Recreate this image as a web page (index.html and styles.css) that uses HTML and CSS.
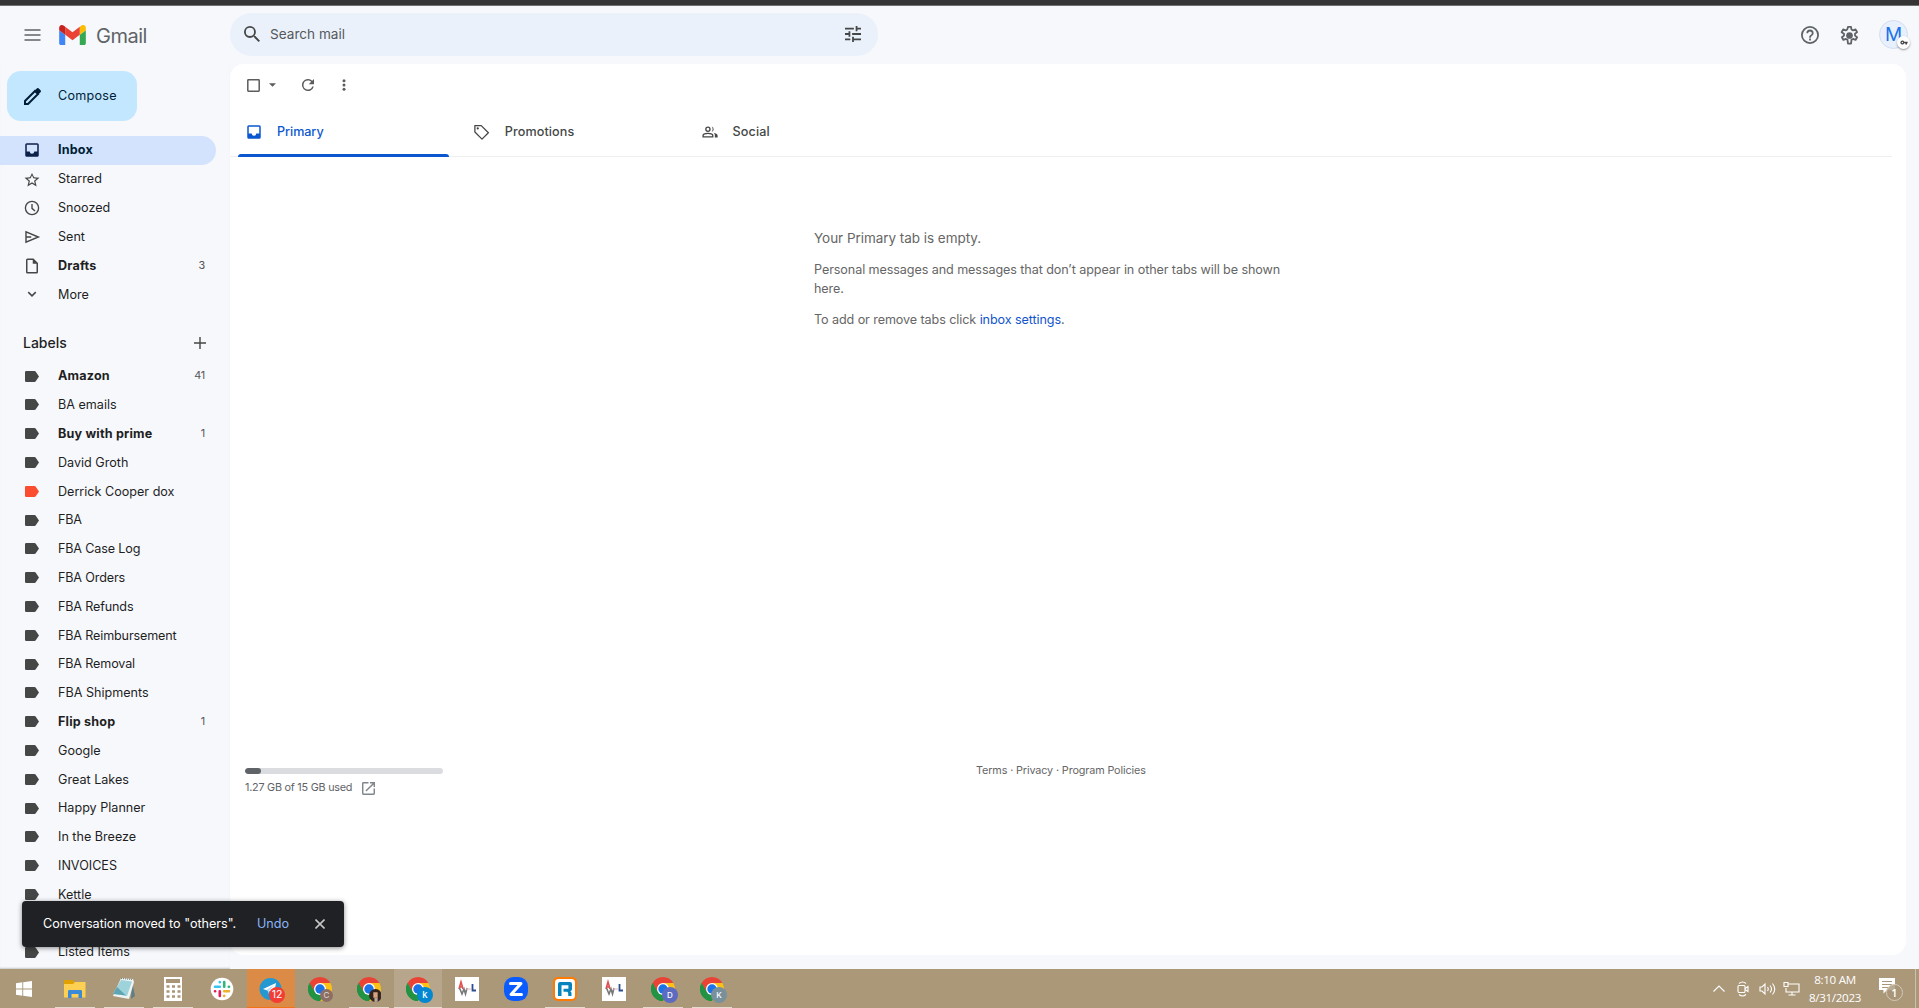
FILE: index.html
```html
<!DOCTYPE html>
<html lang="en">
<head>
<meta charset="utf-8">
<title>Gmail</title>
<link rel="stylesheet" href="styles.css">
</head>
<body>
<svg class="sprite" aria-hidden="true">
  <symbol id="label" viewBox="0 0 14 11"><path d="M1.300 0h8.200c.5 0 .8.2 1.100.5L14 5.500l-3.400 5c-.3.3-.6.5-1.100.5H1.300A1.300 1.300 0 0 1 0 9.700V1.300A1.300 1.300 0 0 1 1.300 0z"/></symbol>
  <symbol id="inbox" viewBox="0 0 24 24"><path fill-rule="evenodd" d="M5 3h14a2 2 0 0 1 2 2v14a2 2 0 0 1-2 2H5a2 2 0 0 1-2-2V5a2 2 0 0 1 2-2zm0 2v9h4a3 3 0 0 0 6 0h4V5z"/></symbol>
  <symbol id="chrome" viewBox="0 0 24 24">
    <path fill="#ea4335" d="M12 12 1.610 6A12 12 0 0 1 22.390 6z"/>
    <path fill="#fbc116" d="M12 12V6h10.390A12 12 0 0 1 12 24l5.200-9z"/>
    <path fill="#229342" d="M12 12l5.200 3L12 24A12 12 0 0 1 1.610 6l5.200 9z"/>
    <path fill="#ea4335" d="M1.610 6 6.800 15 12 6z"/>
    <path fill="#229342" d="M1.610 6 6.800 15l5.200 3 2.600-.5L12 24A12 12 0 0 1 1.610 6z"/>
    <circle cx="12" cy="12" r="6" fill="#fff"/><circle cx="12" cy="12" r="4.700" fill="#1a73e8"/>
  </symbol>
  <symbol id="awl" viewBox="0 0 24 24">
    <path fill="#fff" d="M0 0h24v24H0z"/>
    <path d="M4 12 6 5l2 7M5 10h3" fill="none" stroke="#e05050" stroke-width="1.600"/>
    <path d="M4.500 11 7 17l2-5 1.500 5L12 11" fill="none" stroke="#777" stroke-width="1.600"/>
    <path d="M11 12h5" stroke="#e7b6b6"/><path d="M17.500 7v6.500H21" fill="none" stroke="#2c4d91" stroke-width="1.800"/>
  </symbol>
</svg>
<div class="strip"></div>

<header class="top">
  <div class="brand">
    <svg class="burger" viewBox="0 0 16 12"><path d="M0 1h16M0 6h16M0 11h16" stroke="#5f6368" stroke-width="1.700"/></svg>
    <svg class="logo" viewBox="52 42 88 66"><path fill="#4285f4" d="M58 108h14V74L52 59v43c0 3.320 2.690 6 6 6"/><path fill="#34a853" d="M120 108h14c3.320 0 6-2.690 6-6V59l-20 15"/><path fill="#fbbc04" d="M120 48v26l20-15v-8c0-7.420-8.470-11.650-14.400-7.200"/><path fill="#ea4335" d="M72 74V48l24 18 24-18v26L96 92"/><path fill="#c5221f" d="M52 51v8l20 15V48l-5.600-4.200c-5.940-4.450-14.400-.22-14.400 7.200"/></svg>
    <span class="wordmark">Gmail</span>
  </div>
  <div class="search">
    <svg class="i-search" viewBox="3 3 17.500 17.500"><path d="M15.500 14h-.79l-.28-.27A6.470 6.470 0 0 0 16 9.500 6.500 6.500 0 1 0 9.500 16c1.610 0 3.090-.59 4.230-1.570l.27.28v.79l5 4.990L20.490 19zm-6 0a4.500 4.500 0 1 1 0-9 4.500 4.500 0 0 1 0 9z"/></svg>
    <span>Search mail</span>
    <svg class="i-tune" viewBox="3 3 18 18"><path d="M3 17v2h6v-2zM3 5v2h10V5zm10 16v-2h8v-2h-8v-2h-2v6zM7 9v2H3v2h4v2h2V9zm14 4v-2H11v2zm-6-4h2V7h4V5h-4V3h-2z"/></svg>
  </div>
  <div class="tools">
    <svg class="i20" viewBox="2 2 20 20"><path d="M11 18h2v-2h-2zm1-16a10 10 0 1 0 0 20 10 10 0 0 0 0-20zm0 18a8 8 0 1 1 0-16 8 8 0 0 1 0 16zm0-14a4 4 0 0 0-4 4h2c0-1.100.9-2 2-2s2 .9 2 2c0 2-3 1.750-3 5h2c0-2.250 3-2.500 3-5a4 4 0 0 0-4-4z"/></svg>
    <svg class="i20 gear" viewBox="1.500 1.500 21 21"><path fill="none" stroke="#5f6368" stroke-width="2" stroke-linejoin="round" d="M10.300 2.500h3.400l.5 2.900 1.700 1 2.800-1.100 1.700 3-2.300 1.800v2l2.300 1.800-1.700 3-2.800-1.100-1.700 1-.5 4.100h-3.400l-.5-4.100-1.700-1-2.800 1.100-1.700-3 2.300-1.800v-2L3.300 8.300l1.700-3 2.800 1.100 1.700-1z"/><circle cx="12" cy="12" r="3.700"/></svg>
    <div class="avatar">M<span class="key"><svg viewBox="0 0 24 14"><path fill-rule="evenodd" d="M7 1a6 6 0 1 0 5.700 8H16v4h5V9h2V5H12.700A6 6 0 0 0 7 1zm0 4a2 2 0 1 1 0 4 2 2 0 0 1 0-4z"/></svg></span></div>
  </div>
</header>

<div class="body">
  <nav class="side">
    <div class="compose"><svg viewBox="0 0 17 17"><path fill="none" stroke="#001d35" stroke-width="2" d="M1 16v-3L11 3l3 3L4 16z"/><path d="M10.500 2.800 12.800.5a1.400 1.400 0 0 1 2 0l1.700 1.700a1.400 1.400 0 0 1 0 2l-2.300 2.300z"/></svg><span>Compose</span></div>
    <div class="row active bold"><svg class="i18"><use href="#inbox"/></svg><span>Inbox</span></div>
    <div class="row"><svg class="i18" viewBox="0 0 24 24"><path d="m22 10.240-7.190-.62L12 4 9.190 9.630 2 10.240l5.460 4.730L5.820 22 12 18.270 18.180 22l-1.630-7.030zM12 16.400l-3.760 2.270 1-4.280-3.320-2.880 4.380-.38L12 7.100l1.710 4.040 4.380.38-3.320 2.880 1 4.280z"/></svg><span>Starred</span></div>
    <div class="row"><svg class="i18" viewBox="0 0 24 24"><circle cx="12" cy="12" r="8.800" fill="none" stroke="#444746" stroke-width="1.800"/><path d="M12 6.500v6l4 3.500" fill="none" stroke="#444746" stroke-width="1.800"/></svg><span>Snoozed</span></div>
    <div class="row"><svg class="i18" viewBox="0 0 24 24"><path fill="none" stroke="#444746" stroke-width="1.900" d="M4 5v14l16.500-7zM4 12h7"/></svg><span>Sent</span></div>
    <div class="row bold"><svg class="i18" viewBox="0 0 24 24"><path fill-rule="evenodd" d="M14 2H6a2 2 0 0 0-2 2v16a2 2 0 0 0 2 2h12a2 2 0 0 0 2-2V8zM6 20V4h7v5h5v11z"/></svg><span>Drafts</span><em>3</em></div>
    <div class="row"><svg class="i18" viewBox="0 0 24 24"><path fill="none" stroke="#444746" stroke-width="2" d="m7 9.500 5 5 5-5"/></svg><span>More</span></div>
    <div class="heading"><span>Labels</span><svg viewBox="0 0 12 12"><path d="M6 0v12M0 6h12" stroke="#444746" stroke-width="1.400"/></svg></div>
    <div class="row bold"><svg class="tag"><use href="#label"/></svg><span>Amazon</span><em>41</em></div>
    <div class="row"><svg class="tag"><use href="#label"/></svg><span>BA emails</span></div>
    <div class="row bold"><svg class="tag"><use href="#label"/></svg><span>Buy with prime</span><em>1</em></div>
    <div class="row"><svg class="tag"><use href="#label"/></svg><span>David Groth</span></div>
    <div class="row"><svg class="tag red"><use href="#label"/></svg><span>Derrick Cooper dox</span></div>
    <div class="row fba"><svg class="tag"><use href="#label"/></svg><span>FBA</span></div>
    <div class="row fba"><svg class="tag"><use href="#label"/></svg><span>FBA Case Log</span></div>
    <div class="row fba"><svg class="tag"><use href="#label"/></svg><span>FBA Orders</span></div>
    <div class="row fba"><svg class="tag"><use href="#label"/></svg><span>FBA Refunds</span></div>
    <div class="row fba"><svg class="tag"><use href="#label"/></svg><span>FBA Reimbursement</span></div>
    <div class="row fba"><svg class="tag"><use href="#label"/></svg><span>FBA Removal</span></div>
    <div class="row"><svg class="tag"><use href="#label"/></svg><span>FBA Shipments</span></div>
    <div class="row bold"><svg class="tag"><use href="#label"/></svg><span>Flip shop</span><em>1</em></div>
    <div class="row"><svg class="tag"><use href="#label"/></svg><span>Google</span></div>
    <div class="row"><svg class="tag"><use href="#label"/></svg><span>Great Lakes</span></div>
    <div class="row"><svg class="tag"><use href="#label"/></svg><span>Happy Planner</span></div>
    <div class="row"><svg class="tag"><use href="#label"/></svg><span>In the Breeze</span></div>
    <div class="row"><svg class="tag"><use href="#label"/></svg><span>INVOICES</span></div>
    <div class="row"><svg class="tag"><use href="#label"/></svg><span>Kettle</span></div>
    <div class="row"></div>
    <div class="row"><svg class="tag"><use href="#label"/></svg><span>Listed Items</span></div>
  </nav>

  <main class="panel">
    <div class="toolbar">
      <svg class="check" viewBox="0 0 13 13"><rect x=".8" y=".8" width="11.400" height="11.400" rx=".6" fill="none" stroke="#5a5d5c" stroke-width="1.500"/></svg>
      <svg class="drop" viewBox="0 0 8 4"><path d="M0 0h8L4 4z"/></svg>
      <svg class="refresh" viewBox="4 4 16 16"><path d="M17.650 6.350A8 8 0 1 0 19.730 14h-2.080A6 6 0 1 1 12 6c1.660 0 3.140.69 4.220 1.780L13 11h7V4z"/></svg>
      <svg class="more" viewBox="0 0 4 12"><circle cx="2" cy="1.700" r="1.500"/><circle cx="2" cy="6" r="1.500"/><circle cx="2" cy="10.300" r="1.500"/></svg>
    </div>
    <div class="tabs">
      <div class="tab on"><svg class="i18"><use href="#inbox"/></svg><span>Primary</span></div>
      <div class="tab"><svg class="i18" viewBox="0 0 24 24"><path fill="none" stroke="#444746" stroke-width="1.700" stroke-linejoin="round" d="M2.500 3.500H11L20.500 13 12 21.500 2.500 12z"/><circle cx="6.300" cy="7.300" r="1.500"/></svg><span>Promotions</span></div>
      <div class="tab"><svg class="i18" viewBox="-1 -1 26 26"><path fill="none" stroke="#444746" stroke-width="1.900" d="M2 19v-1.800c0-2 3.500-3.200 7-3.200s7 1.200 7 3.200V19z"/><circle cx="9" cy="8" r="3" fill="none" stroke="#444746" stroke-width="1.900"/><path d="M14.500 4.200a4 4 0 0 1 0 7.600c1.800-2.300 1.800-5.300 0-7.600zM17 13.200c3 .6 6 1.800 6 4V20h-4v-3c0-1.600-.7-2.800-2-3.800z"/></svg><span>Social</span></div>
    </div>
    <section class="empty">
      <p class="lead">Your Primary tab is empty.</p>
      <p>Personal messages and messages that don’t appear in other tabs will be shown<br>here.</p>
      <p class="hint">To add or remove tabs click <a>inbox settings</a>.</p>
    </section>
    <footer class="foot">
      <div class="storage">
        <div class="meter"><i></i></div>
        <div class="used"><span>1.27 GB of 15 GB used</span><svg viewBox="3 3 18 18"><path d="M19 19H5V5h7V3H5a2 2 0 0 0-2 2v14a2 2 0 0 0 2 2h14c1.100 0 2-.9 2-2v-7h-2zM14 3v2h3.590l-9.830 9.830 1.410 1.410L19 6.410V10h2V3z"/></svg></div>
      </div>
      <div class="legal">Terms · Privacy · Program Policies</div>
    </footer>
  </main>
</div>

<div class="toast"><span class="msg">Conversation moved to "others".</span><span class="undo">Undo</span><svg viewBox="0 0 10 10"><path d="m.5.5 9 9m0-9-9 9" stroke="#c4c7c5" stroke-width="1.600"/></svg></div>

<div class="taskbar">
  <div class="task start"><svg viewBox="0 0 16 16"><path fill="#fff" d="M0 2.200 6.300 1.300v6.200H0zM7.200 1.200 16 0v7.500H7.200zM0 8.500h6.300v6.200L0 13.800zM7.200 8.500H16V16l-8.800-1.200z"/></svg></div>
  <div class="task run"><svg class="a24" viewBox="0 0 24 24"><path fill="#e0a100" d="M1 3h9l1.500 2H22v4H1z"/><path fill="#fdcf53" d="M1 7h9l2-2h10.500v15.500H1z"/><path fill="#3a8ad8" d="M5 21v-6.500c0-1 .5-1.500 1.500-1.500h11c1 0 1.500.5 1.500 1.500V21h-3.500v-4h-7v4z"/></svg></div>
  <div class="task run"><svg class="a24" viewBox="0 0 24 24"><path fill="#5f7f86" d="M20 4l3 15-4 3z"/><path fill="#eef4f4" d="m9 1 12 1 1 3-5 17L1 19z"/><path fill="#9fd3dc" d="m9 3 11 1.500L15 19 1 16.500z"/><path fill="#5fa5b4" d="m5 10 9 8.500L1 17z"/><path stroke="#68767a" stroke-dasharray="1 1" d="m9 1.500 12 1"/></svg></div>
  <div class="task run"><svg class="a24" viewBox="0 0 24 24"><path fill="#fff" d="M3 0h18v24H3z"/><path fill="#a99577" d="M5 2h14v4H5z"/><path stroke="#a99577" stroke-width="2.500" stroke-dasharray="3 2.500" d="M5.500 9.500h14M5.500 14.500h14M5.500 19.500h14"/></svg></div>
  <div class="task"><svg class="a24" viewBox="0 0 24 24"><circle cx="12" cy="12" r="11.300" fill="#fff"/><g fill="none" stroke-width="2.600" stroke-linecap="round"><path stroke="#36c5f0" d="M5 9.800h4.800M9.800 5v.2"/><path stroke="#2eb67d" d="M14.200 5v4.800M19 9.800h-.2"/><path stroke="#ecb22e" d="M19 14.200h-4.800M14.200 19v-.2"/><path stroke="#e01e5a" d="M9.800 19v-4.800M5 14.200h.2"/></g></svg></div>
  <div class="task alert"><svg class="a24" viewBox="0 0 24 24"><circle cx="11.500" cy="12" r="11" fill="#2498d0"/><path fill="#fff" d="m4 12 13-6-2 11-5-3z"/><path fill="#b9dcee" d="m8 12.500 7-4.500-5 6v3z"/></svg><b class="badge count">12</b></div>
  <div class="task"><svg class="a24"><use href="#chrome"/></svg><b class="badge brown">C</b></div>
  <div class="task run"><svg class="a24"><use href="#chrome"/></svg><b class="badge photo"><svg viewBox="0 0 12 12"><path fill="#33231d" d="M0 12V4a5 4 0 0 1 11-1v9z"/><path fill="#d6a483" d="M4 3h4v5H4z"/><path fill="#b9a89a" d="M5 8h3v4H5z"/></svg></b></div>
  <div class="task current"><svg class="a24"><use href="#chrome"/></svg><b class="badge blue">k</b></div>
  <div class="task"><svg class="a24"><use href="#awl"/></svg></div>
  <div class="task"><svg class="a24" viewBox="0 0 24 24"><rect width="24" height="24" rx="9.500" fill="#0b5cff"/><path fill="none" stroke="#fff" stroke-width="3" stroke-linejoin="round" stroke-linecap="round" d="M6.500 6.500H17L7 17.500h10.500"/></svg></div>
  <div class="task run"><svg class="a24" viewBox="0 0 24 24"><rect width="24" height="24" rx="5" fill="#ff7a00"/><rect x="2" y="2" width="20" height="20" rx="3.500" fill="#fff"/><path fill="#0684bd" fill-rule="evenodd" d="M5 7a2 2 0 0 1 2-2h10a2 2 0 0 1 2 2v5c0 1.300-.7 2-2 2.200 1 .4 1.500 1 1.500 2V19h-3.300v-2.500c0-1.200-.6-1.800-1.800-1.800H10.500v-2.900h4.900V8.200H8.500V19H5z"/></svg></div>
  <div class="task"><svg class="a24"><use href="#awl"/></svg></div>
  <div class="task run"><svg class="a24"><use href="#chrome"/></svg><b class="badge indigo">D</b></div>
  <div class="task run"><svg class="a24"><use href="#chrome"/></svg><b class="badge slate">K</b></div>
  <div class="tray">
    <svg class="up" viewBox="0 0 12 7"><path d="m.5 6.500 5.500-5.500 5.500 5.500"/></svg>
    <svg class="cam" viewBox="0 0 12 16"><rect x="1" y="4.500" width="7" height="7" rx="1"/><path d="m8 7.500 3-2v5l-3-2M2 2.500q3.500-3 7 0M2 13.500q3.500 3 7 0"/></svg>
    <svg class="vol" viewBox="0 0 17 14"><path d="M1 5v4h2l3 3V2L3 5zM8.500 5q1.500 2 0 4M11 3.500q3 3.500 0 7M13.500 1.500q4.500 5.500 0 11"/></svg>
    <svg class="net" viewBox="0 0 17 14"><path d="M5 2h11v8H3V6M9 10v3M5.500 13h7M1 .5h4v4H1z"/></svg>
    <div class="clock"><span>8:10 AM</span><span>8/31/2023</span></div>
    <div class="note"><svg viewBox="0 0 16 16"><path fill="#fff" stroke="none" d="M0 0h16v12H8l-3.500 3.500V12H0z"/><path stroke="#a99577" d="M3 3.500h10M3 6.500h10M3 9.500h6"/></svg><b>1</b></div>
    <i class="peek"></i>
  </div>
</div>
</body>
</html>
```
FILE: styles.css
```css
* { box-sizing: border-box; }
body {
  margin: 0;
  width: 1919px;
  height: 1008px;
  overflow: hidden;
  position: relative;
  display: flex;
  flex-direction: column;
  background: #f6f8fc;
  color: #1f1f1f;
  font: 12.6px/18px Inter, "Liberation Sans", sans-serif;
}
svg { display: block; flex: none; fill: #444746; }
.sprite { position: absolute; width: 0; height: 0; }
.strip { flex: none; height: 6px; background: #353535; border-bottom: 1px solid #706f72; }

/* Header */
.top { flex: none; height: 58px; display: flex; align-items: flex-start; padding-top: 7px; }
.brand { width: 230px; height: 43px; display: flex; align-items: center; padding: 1px 0 0 24px; }
.burger { width: 17px; height: 12px; margin-right: 18px; }
.logo { width: 27px; height: 20px; margin-right: 10px; }
.wordmark { font: 20px/24px Inter, sans-serif; color: #5f6368; letter-spacing: -.5px; padding-top: 1px; }
.search { width: 648px; height: 43px; border-radius: 22px; background: #eaf1fb; display: flex; align-items: center; padding: 0 17px 1px 14px; }
.search span { flex: 1; color: #55585a; font-size: 13.6px; }
.i-search { width: 16px; height: 16px; margin-right: 10px; }
.i-tune { width: 16px; height: 16px; }
.tools { margin-left: auto; display: flex; align-items: center; height: 43px; padding-right: 11px; }
.i20 { width: 18px; height: 18px; margin-right: 21.5px; fill: #5f6368; position: relative; top: .5px; }
.i20.gear { width: 19px; height: 19px; margin-right: 20px; }
.avatar { width: 29px; height: 29px; border: 1px solid #d3def0; border-radius: 50%; background: #e8f0fe; color: #1a73e8; font-size: 19px; line-height: 27px; text-align: center; position: relative; }
.key { position: absolute; left: 17px; top: 15px; width: 13px; height: 13px; border-radius: 50%; background: #fff; box-shadow: 0 1px 2px #0006; display: grid; place-items: center; }
.key svg { width: 8px; height: 5px; }

/* Sidebar */
.body { flex: none; height: 905px; display: flex; overflow: hidden; }
.side { width: 230px; padding-top: 7px; box-shadow: inset 0 -2px 2px -1px #0003; }
.compose { width: 130px; height: 50px; margin: 0 0 15px 7px; border-radius: 14px; background: #c2e7ff; display: flex; align-items: center; gap: 17px; padding-left: 17px; color: #001d35; letter-spacing: .25px; }
.compose svg { width: 17px; height: 17px; fill: #001d35; }
.row { width: 216px; height: 28.8px; padding: 0 11px 0 23px; display: flex; align-items: center; }
.row span { flex: 1; white-space: nowrap; padding-top: .6px; }
.row em { font-style: normal; font-size: 10.8px; color: #555; padding-top: .6px; letter-spacing: -.2px; }
.bold span { font-weight: 700; letter-spacing: .18px; }
.fba span { letter-spacing: -.15px; }
.i18 { width: 18px; height: 18px; margin-right: 17px; }
.active { background: #d3e3fd; border-radius: 0 15px 15px 0; color: #001d35; }
.active span { padding-top: 0; }
.active svg { fill: #0b2149; }
.tag { width: 14px; height: 11px; margin: 0 19px 0 2px; }
.red { fill: #fb4c2f; }
.heading { width: 216px; height: 53px; padding: 25.5px 10px 0 23px; display: flex; align-items: flex-start; justify-content: space-between; font-size: 14px; font-weight: 500; }
.heading svg { width: 12px; height: 12px; margin-top: 3px; }

/* Mail panel */
.panel { width: 1676px; height: 891px; border-radius: 14px; background: #fff; display: flex; flex-direction: column; }
.toolbar { height: 43px; display: flex; align-items: center; padding: 0 0 1px 17px; }
.toolbar svg { fill: #5a5d5c; }
.check { width: 13px; height: 13px; margin-right: 9px; }
.drop { width: 7px; height: 4px; margin-right: 26px; }
.refresh { width: 12px; height: 12px; margin-right: 28px; }
.more { width: 4px; height: 12px; }
.tabs { width: 1662px; height: 50px; display: flex; border-bottom: 1px solid #eceeef; }
.tab { width: 227.8px; height: 50px; display: flex; align-items: center; padding: 0 0 1px 15px; color: #444746; font-weight: 500; letter-spacing: .1px; position: relative; }
.tab .i18 { margin: 1px 14px 0 0; }
.tab.on { color: #0b57d0; letter-spacing: -.05px; }
.tab.on svg { fill: #0b57d0; }
.tab.on::after { content: ""; position: absolute; left: 8px; bottom: 0; width: 211px; height: 3px; border-radius: 3px 3px 0 0; background: #0b57d0; }
.empty { height: 611px; padding: 72px 0 0 584px; color: #666; letter-spacing: -.09px; }
.empty p { margin: 0 0 12px; line-height: 19px; white-space: nowrap; }
.empty .lead { font-size: 13.5px; letter-spacing: -.04px; }
.empty a { color: #1155cc; }
.foot { display: flex; padding: 0 15px; font-size: 10.8px; line-height: 14px; color: #5f6368; }
.storage { width: 731px; }
.meter { width: 198px; height: 6px; border-radius: 3px; background: #dadce0; overflow: hidden; }
.meter i { display: block; width: 16px; height: 6px; border-radius: 3px; background: #5f6368; }
.used { display: flex; align-items: center; gap: 9.5px; margin-top: 7px; letter-spacing: -.23px; }
.used svg { width: 13px; height: 13px; fill: #80868b; }
.legal { margin-top: -4px; color: #666; letter-spacing: -.12px; }

/* Notification over the sidebar */
.toast { position: absolute; left: 22px; top: 901px; width: 322px; height: 46px; border-radius: 4px; background: #202124; box-shadow: 0 1px 5px #0007; display: flex; align-items: center; padding: 0 19px 0 21px; color: #fff; }
.undo { margin-left: auto; margin-right: 26px; color: #8ab4f8; }
.toast svg { width: 10px; height: 10px; }

/* Windows taskbar */
.taskbar { flex: none; height: 39px; background: #ab9879; display: flex; gap: 1px; padding-left: 2px; }
.task { width: 48px; height: 39px; position: relative; display: flex; align-items: center; justify-content: center; padding-top: 1px; }
.start { padding-right: 4px; }
.start svg { width: 16px; height: 16px; }
.a24 { width: 24px; height: 24px; }
.run::after, .current::after, .alert::after { content: ""; position: absolute; left: 4px; right: 4px; bottom: 0; height: 1px; background: #e6dbd0; }
.current { background: #b8a68c; }
.current::after { left: 0; right: 0; }
.alert { background: #db8b46; }
.alert::after { left: 0; right: 0; background: #f27316; }
.badge { position: absolute; left: 24px; top: 20px; width: 13px; height: 13px; border-radius: 50%; overflow: hidden; color: #fff; font: 8px/13px Inter, sans-serif; text-align: center; }
.count { left: 22px; top: 18px; width: 16px; height: 16px; background: #f23c34; font-size: 10.5px; line-height: 16px; }
.brown { background: #8d6e63; color: #ddd; }
.blue { left: 23px; top: 18px; width: 16px; height: 16px; background: #0288d1; line-height: 16px; font-size: 9.5px; font-weight: 500; }
.indigo { left: 23px; top: 18px; width: 16px; height: 16px; background: #5c6bc0; line-height: 16px; font-weight: 500; }
.slate { left: 23px; top: 18px; width: 16px; height: 16px; background: #78909c; line-height: 16px; font-weight: 500; }
.tray { margin-left: auto; display: flex; align-items: center; color: #fff; }
.tray svg { fill: none; stroke: #fff; stroke-width: 1.1; }
.up { width: 12px; height: 7px; margin-right: 12px; }
.cam { width: 12px; height: 16px; margin-right: 10px; }
.vol { width: 17px; height: 14px; margin-right: 7px; }
.net { width: 17px; height: 14px; margin-right: 7px; }
.clock { width: 56px; display: flex; flex-direction: column; text-align: center; font: 11.6px/18px "Open Sans", sans-serif; letter-spacing: -.3px; white-space: nowrap; padding-top: 1px; }
.note { width: 25px; height: 25px; margin: 2px 11px 0 16px; position: relative; padding-top: 1px; }
.note svg { width: 16px; height: 16px; }
.note b { position: absolute; left: 7px; top: 7px; width: 17px; height: 17px; border: 1px solid #d4c9b8; border-radius: 50%; background: #a99577cc; font: 600 11px/15px "Open Sans", sans-serif; text-align: center; }
.peek { width: 1px; height: 39px; margin-right: 3px; background: #cdc1ad; }
```
